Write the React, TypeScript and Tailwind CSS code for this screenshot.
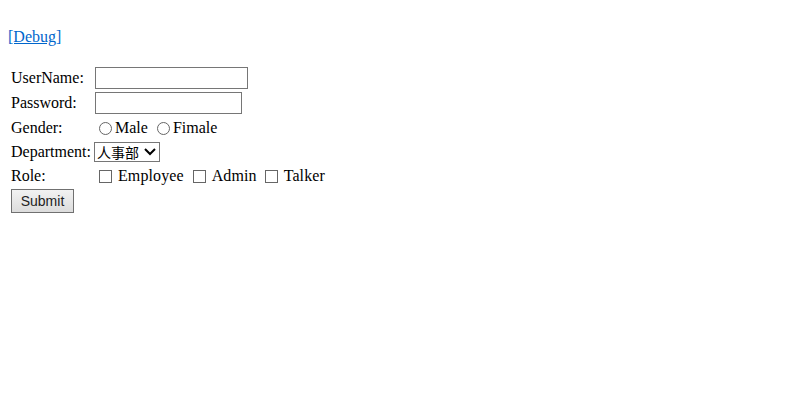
import React from "react";

const serif = { fontFamily: '"Liberation Serif", "Noto Sans CJK SC", serif' };

function Radio({ className }: { className: string }) {
  return <span className={"inline-block w-[13px] h-[13px] rounded-full border border-[#666] bg-white " + className} />;
}
function Check() {
  return <span className="inline-block w-[13px] h-[13px] border border-[#666] bg-white ml-[5px] mr-[6px]" />;
}

export default function App() {
  return (
    <div className="w-[801px] h-[407px] bg-white text-black text-[16px] leading-[18px]" style={serif}>
      <div className="pt-[28px] pl-[8px]">
        <a href="#" className="text-[#0066cc] underline">[Debug]</a>
      </div>
      <div className="mt-[20px] ml-[11px] grid grid-cols-[83px_auto] w-fit items-center">
        <div className="h-[24px] flex items-center">UserName:</div>
        <div className="h-[24px] flex items-center">
          <div className="ml-[1px] w-[153px] h-[22px] border border-[#767676] bg-white" />
        </div>
        <div className="h-[26px] flex items-center">Password:</div>
        <div className="h-[26px] flex items-center">
          <div className="ml-[1px] w-[147px] h-[22px] border border-[#767676] bg-white" />
        </div>
        <div className="h-[24px] flex items-center">Gender:</div>
        <div className="h-[24px] flex items-center">
          <Radio className="ml-[5px] mr-[3px]" />
          <span>Male</span>
          <Radio className="ml-[9px] mr-[3px]" />
          <span>Fimale</span>
        </div>
        <div className="h-[24px] flex items-center">Department:</div>
        <div className="h-[24px] flex items-center">
          <div className="flex items-center h-[20px] w-[66px] border border-[#767676] bg-white pl-[2px] text-[14px]" style={{ fontFamily: '"Noto Sans CJK SC", sans-serif' }}>
            <span className="leading-[18px]">人事部</span>
            <svg width="14" height="10" viewBox="0 0 14 10" className="ml-[4px]">
              <path d="M2 2 L7 7 L12 2" fill="none" stroke="#000" strokeWidth="2" />
            </svg>
          </div>
        </div>
        <div className="h-[24px] flex items-center">Role:</div>
        <div className="h-[24px] flex items-center">
          <Check />
          <span className="mr-[4px] tracking-[0.1px]">Employee</span>
          <Check />
          <span className="mr-[3px] tracking-[0.1px]">Admin</span>
          <Check />
          <span className="tracking-[0.1px]">Talker</span>
        </div>
      </div>
      <div className="ml-[11px] mt-[1px]">
        <button className="w-[63px] h-[24px] border border-[#707070] bg-gradient-to-b from-[#f2f2f2] to-[#dcdcdc] text-[14px] text-[#222]" style={{ fontFamily: '"Liberation Sans", Arial, sans-serif' }}>
          Submit
        </button>
      </div>
    </div>
  );
}
